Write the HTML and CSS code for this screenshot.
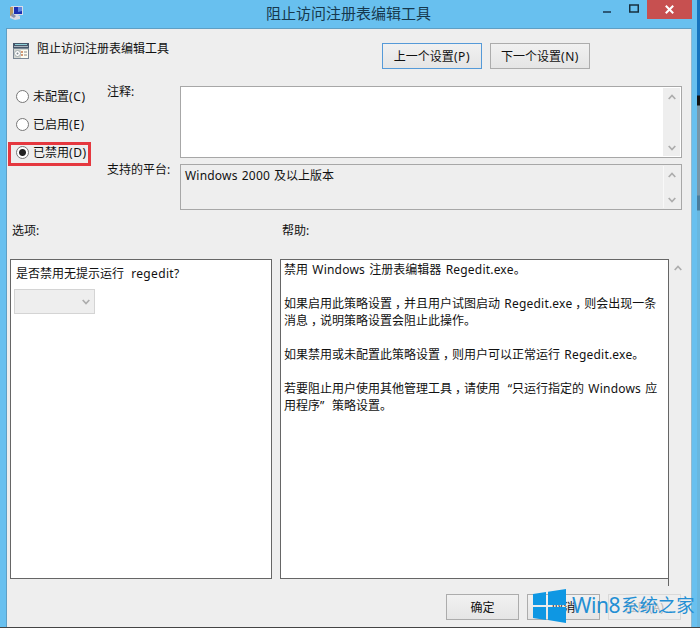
FILE: index.html
```html
<!DOCTYPE html>
<html lang="zh-CN">
<head>
<meta charset="utf-8">
<title>阻止访问注册表编辑工具</title>
<link rel="stylesheet" href="styles.css">
</head>
<body>
<div class="screen">
  <div class="window">
    <header class="titlebar">
      <svg class="app-icon" viewBox="0 0 16 16"><path d="M2 1h12v9H5z" fill="#d8dce8"/><path d="M5 2h8v7H5z" fill="#1c2fb0"/><path d="M9 2h4v4L9 7z" fill="#5c86e0"/><path d="M1 2h3v9H1z" fill="#b99a62"/><path d="M1 11l5-2 5 2v3l-5 1-5-2z" fill="#d9dbe3"/><path d="M3 8l4 3-2 2-3-2z" fill="#8b90aa"/></svg>
      <h1>阻止访问注册表编辑工具</h1>
      <div class="controls">
        <svg class="min" viewBox="0 0 8 2"><path d="M0 1h8" stroke="#2c5877" stroke-width="2"/></svg>
        <svg class="max" viewBox="0 0 10 9"><path d="M.75 1h8.500v7H.75z" fill="none" stroke="#17303f" stroke-width="1.5"/></svg>
        <div class="close"><svg viewBox="0 0 8 8"><path d="M.7.7l6.600 6.600M7.300.7L.7 7.300" stroke="#fff" stroke-width="1.800"/></svg></div>
      </div>
    </header>
    <main class="client">
      <section class="heading">
        <svg class="policy-icon" viewBox="0 0 16 16"><path d="M0 0h16v16H0z" fill="#7b8794"/><path d="M0 0h16v5H0z" fill="#46566a"/><path d="M2 1h12v1H2z" fill="#8fd0d8"/><path d="M1 3h14v1H1z" fill="#a9b4bd"/><path d="M1 6h14v9H1z" fill="#d5d9d3"/><path d="M8 7h7v8H8z" fill="#fffdf0"/><path d="M8 9h2M8 12h2" stroke="#c57a4c" stroke-width="1.500"/><path d="M11 9h3M11 12h3" stroke="#888"/><circle cx="4.500" cy="10.500" r="3" fill="#fff" stroke="#a2acae"/><circle cx="4.500" cy="10.500" r="1" fill="#7d888d"/></svg>
        <span class="name">阻止访问注册表编辑工具</span>
        <div class="button focus">上一个设置<span class="key">(P)</span></div>
        <div class="button">下一个设置<span class="key">(N)</span></div>
      </section>
      <section class="state">
        <div class="radios">
          <div class="radio"><i></i>未配置<span class="key">(C)</span></div>
          <div class="radio"><i></i>已启用<span class="key">(E)</span></div>
          <div class="radio checked"><i></i>已禁用<span class="key">(D)</span></div>
        </div>
        <div class="labels"><span>注释:</span><span>支持的平台:</span></div>
        <div class="fields">
          <div class="field comment"><div class="value"></div><div class="scroll"><svg viewBox="0 0 8 6"><path d="M.7 5L4 1.5 7.3 5"/></svg><svg viewBox="0 0 8 6"><path d="M.7 1L4 4.5 7.3 1"/></svg></div></div>
          <div class="field platform"><div class="value"><span class="latin">Windows 2000</span> 及以上版本</div><div class="scroll"><svg viewBox="0 0 8 6"><path d="M.7 5L4 1.5 7.3 5"/></svg><svg viewBox="0 0 8 6"><path d="M.7 1L4 4.5 7.3 1"/></svg></div></div>
        </div>
      </section>
      <section class="captions"><span>选项:</span><span>帮助:</span></section>
      <section class="panes">
        <div class="pane options">
          <p>是否禁用无提示运行 <span class="regedit">regedit?</span></p>
          <div class="select"><svg viewBox="0 0 8 6"><path d="M.7 1L4 4.5 7.3 1"/></svg></div>
        </div>
        <div class="pane help">
          <p>禁用 <span class="latin">Windows</span> 注册表编辑器 <span class="latin">Regedit.exe</span>。</p>
          <p>如果启用此策略设置<span class="comma">，</span>并且用户试图启动 <span class="latin">Regedit.exe</span><span class="comma">，</span>则会出现一条<br>消息<span class="comma">，</span>说明策略设置会阻止此操作。</p>
          <p>如果禁用或未配置此策略设置<span class="comma">，</span>则用户可以正常运行 <span class="latin">Regedit.exe</span>。</p>
          <p>若要阻止用户使用其他管理工具<span class="comma">，</span>请使用<span class="open">“</span>只运行指定的 <span class="latin">Windows</span> 应<br>用程序<span class="end">”</span>策略设置。</p>
        </div>
        <svg class="help-up" viewBox="0 0 8 6"><path d="M.7 5L4 1.5 7.3 5"/></svg>
      </section>
      <footer class="actions">
        <div class="button">确定</div>
        <div class="button">取消</div>
        <div class="button disabled">应用(A)</div>
      </footer>
    </main>
  </div>
  <div class="desktop"></div>
  <div class="watermark">
    <svg viewBox="0 0 33 34"><path d="M0 5l13-2v13H0zM15 2.700L33 0v16H15zM0 18h13v13L0 29zM15 18h18v16l-18-3z" fill="#0e97e3"/></svg>
    <span class="brand">Win8</span><span class="site">系统之家</span>
  </div>
</div>
</body>
</html>
```
FILE: styles.css
```css
*, *::before, *::after { box-sizing: border-box; }
body {
  margin: 0;
  font: 12px/17px "Noto Sans", "Noto Sans CJK SC", sans-serif;
  color: #111;
  overflow: hidden;
}
h1, p { margin: 0; font-weight: normal; }
svg { display: block; flex: none; }
.key { letter-spacing: .6px; }
.latin { letter-spacing: .2px; }
.screen {
  position: relative;
  display: flex;
  width: 700px;
  height: 628px;
  border-bottom: 1px solid #444;
}
.window { display: flex; flex-direction: column; width: 697px; background: #68c0ef; }
.desktop {
  flex: 1;
  background: linear-gradient(#1673bd 0 95px, #111 96px 105px, #7796a8 106px 195px, #497c9b 196px 210px, #68b7df 211px);
}
.titlebar { display: flex; height: 28px; padding-left: 9px; }
.app-icon { width: 16px; height: 16px; margin-top: 5px; }
.titlebar h1 {
  width: 166px;
  margin-left: 241px;
  font-size: 15px;
  line-height: 26px;
  color: #16384d;
  white-space: nowrap;
}
.controls { display: flex; flex: 1; justify-content: flex-end; }
.min { width: 8px; height: 2px; margin: 11px 18px 0 0; }
.max { width: 10px; height: 9px; margin: 4px 8px 0 0; }
.close { display: flex; align-items: center; justify-content: center; width: 45px; height: 19px; margin-right: 5px; background: #c75050; }
.close svg { width: 9px; height: 9px; }
.client {
  flex: 1;
  margin: 0 5px 0 6px;
  border: 1px solid #5f9fc4;
  border-bottom: 0;
  border-right-color: #90b9d0;
  background: #eee;
}
.heading { display: flex; height: 57px; padding: 14px 0 0 6px; }
.policy-icon { width: 16px; height: 16px; }
.name { width: 345px; margin: -3px 0 0 8px; }
.button {
  height: 26px;
  width: 100px;
  border: 1px solid #acacac;
  background: linear-gradient(#f1f1f1, #e5e5e5);
  text-align: center;
  line-height: 25px;
  white-space: nowrap;
}
.heading .button + .button { margin-left: 8px; }
.button.focus { border-color: #559ad8; }
.state { display: flex; height: 124px; }
.radios { width: 100px; padding-left: 2px; margin-top: -2px; }
.radio { display: flex; align-items: center; width: 82px; height: 24px; margin-bottom: 4px; padding-left: 7px; white-space: nowrap; }
.radio i { width: 13px; height: 13px; margin-right: 4px; border: 1px solid #777; border-radius: 50%; background: #fff; }
.radio.checked { position: relative; }
.radio.checked::after { content: ""; position: absolute; left: -1px; top: 2px; width: 83px; height: 24px; border: 3px solid #e5383f; }
.radio.checked i { background: radial-gradient(circle, #222 0 3px, #fff 4px); }
.labels { display: flex; flex-direction: column; gap: 61px; width: 73px; margin-top: -3px; }
.labels span { white-space: nowrap; }
.fields { display: flex; flex-direction: column; gap: 6px; width: 502px; }
.field { display: flex; border: 1px solid #a7a7a7; padding: 1px; }
.comment { height: 72px; background: #fff; }
.platform { height: 46px; }
.value { flex: 1; padding: 1px 3px; word-spacing: .8px; }
.scroll { display: flex; flex-direction: column; justify-content: space-between; align-items: center; width: 17px; padding: 6px 0 5px; background: #eee; }
.platform .scroll { border-left: 1px solid #f8f8f8; }
.scroll svg, .select svg, .help-up { width: 8px; height: 6px; fill: none; stroke: #adadad; stroke-width: 1.7; }
.captions { display: flex; height: 49px; padding: 12px 0 0 5px; }
.captions span { width: 270px; }
.panes { display: flex; height: 327px; padding-left: 3px; }
.pane { height: 320px; border: 1px solid #666; background: #fff; }
.options { width: 262px; padding: 5px 3px; }
.options p { padding-left: 2px; }
.regedit { margin-left: 4px; letter-spacing: .35px; }
.select { display: flex; justify-content: flex-end; align-items: center; width: 81px; height: 25px; margin-top: 7px; padding-right: 4px; border: 1px solid #d4d4d4; background: #eee; }
.help { position: relative; width: 389px; margin-left: 8px; padding: 1px 3px; white-space: nowrap; word-spacing: 1.2px; }
.help::after { content: ""; position: absolute; right: -1px; top: 318px; width: 1px; height: 8px; background: #666; }
.help p + p { margin-top: 17px; }
.open, .end, .comma { display: inline-block; width: 12px; }
.open { text-align: right; }
.comma { text-indent: 3px; }
.help-up { margin: 6px 0 0 5px; }
.actions { display: flex; gap: 8px; padding: 8px 0 0 439px; }
.actions .button { width: 73px; }
.button.disabled { color: #bbb; border-color: #d9d9d9; background: #eee; }
.watermark { position: absolute; left: 533px; top: 589px; display: flex; color: #238fd4; white-space: nowrap; }
.watermark svg { width: 33px; height: 34px; }
.brand { width: 49px; margin-left: 6px; font-size: 21px; line-height: 32px; letter-spacing: -.5px; }
.site { font-size: 18.4px; line-height: 32px; }
```
